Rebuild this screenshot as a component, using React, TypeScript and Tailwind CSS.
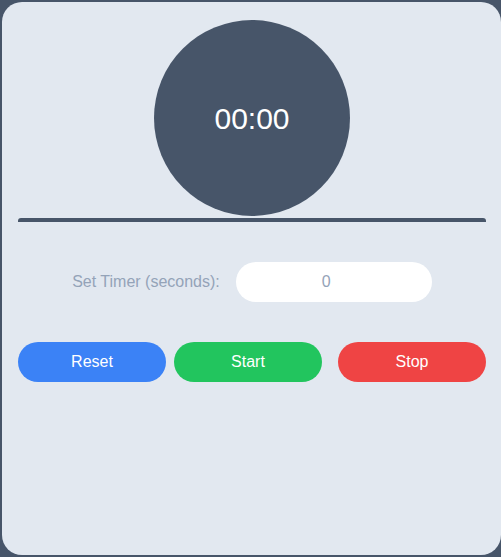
export default function App() {
  return (
    <div className="min-h-screen bg-[#475569] pl-[2px] py-[2px] font-['Liberation_Sans',Arial,sans-serif]">
      <div className="h-[553px] rounded-[20px] bg-[#e2e8f0] pl-4 pr-[15px] pt-[18px]">
        <div className="mx-auto flex h-[196px] w-[196px] items-center justify-center rounded-full bg-[#475569]">
          <span className="text-[30px] text-white">00:00</span>
        </div>
        <div className="mt-[2px] h-[4px] rounded-t-[3px] bg-[#475569]" />

        <div className="mt-10 flex items-center justify-center gap-4">
          <label className="text-base text-[#94a3b8]">Set Timer (seconds):</label>
          <input
            type="number"
            defaultValue={0}
            className="h-10 w-[196px] rounded-full bg-white text-center text-base text-[#94a3b8] outline-none"
          />
        </div>

        <div className="mt-10 flex items-center">
          <button className="h-10 w-[148px] rounded-full bg-[#3b82f6] text-base text-white">Reset</button>
          <button className="ml-2 h-10 w-[148px] rounded-full bg-[#22c55e] text-base text-white">Start</button>
          <button className="ml-auto h-10 w-[148px] rounded-full bg-[#ef4444] text-base text-white">Stop</button>
        </div>
      </div>
    </div>
  );
}
